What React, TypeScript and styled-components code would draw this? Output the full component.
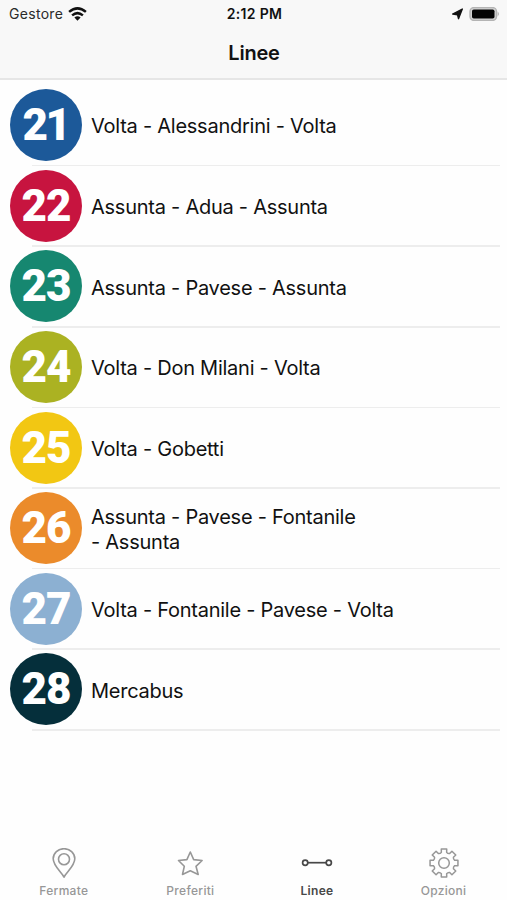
import React from "react";
import styled, { createGlobalStyle } from "styled-components";

const GlobalStyle = createGlobalStyle`
  * { box-sizing: border-box; }
  body { margin: 0; background: #fff; }
`;

const Screen = styled.div`
  width: 507px;
  height: 900px;
  display: flex;
  flex-direction: column;
  overflow: hidden;
  background: #fefefe;
  color: #111;
  font-family: Inter, "Liberation Sans", sans-serif;
`;

const Header = styled.header`
  height: 80px;
  flex: none;
  background: #f8f8f8;
  border-bottom: 2px solid #e6e6e6;
`;

const StatusBar = styled.div`
  height: 27px;
  padding: 0 7px 0 9px;
  display: grid;
  grid-template-columns: 1fr auto 1fr;
  align-items: center;
  font-size: 14px;
  line-height: 28px;
`;

const Carrier = styled.div`
  display: flex;
  align-items: center;
  gap: 5px;
  color: #2a2a2a;
  letter-spacing: 0.3px;
  svg { margin-bottom: 1px; }
`;

const Clock = styled.div`
  font-size: 14px;
  font-weight: 600;
  letter-spacing: 0.3px;
`;

const Indicators = styled.div`
  display: flex;
  justify-content: flex-end;
  align-items: center;
  gap: 6px;
`;

const Title = styled.h1`
  margin: 0;
  padding-left: 1px;
  height: 52px;
  line-height: 52px;
  text-align: center;
  font-size: 20px;
  font-weight: 600;
  letter-spacing: -0.2px;
`;

const List = styled.ul`
  flex: 1;
  margin: 0;
  padding: 5.8px 0 0;
  list-style: none;
`;

const Row = styled.li`
  height: 80.6px;
  padding-left: 10px;
  display: grid;
  grid-template-columns: 22px 50px 9px 1fr;
  grid-template-rows: 1fr 1.6px;
  align-items: center;
`;

const Badge = styled.div<{ $color: string; $tight: boolean }>`
  grid-column: 1 / 3;
  width: 72px;
  height: 72px;
  padding-right: ${(p) => (p.$tight ? 1 : 0)}px;
  border-radius: 50%;
  background: ${(p) => p.$color};
  color: #fff;
  display: flex;
  align-items: center;
  justify-content: center;
  font: 900 44px/72px Roboto, sans-serif;
  letter-spacing: ${(p) => (p.$tight ? -2.5 : -1)}px;
`;

const Name = styled.div`
  grid-column: 4;
  padding-top: 2.6px;
  max-width: 325px;
  white-space: pre-line;
  font-size: 20px;
  line-height: 24.4px;
  letter-spacing: -0.25px;
`;

const Separator = styled.div`
  grid-column: 2 / 5;
  align-self: stretch;
  margin-right: 7px;
  background: #ededed;
`;

const TabBar = styled.nav`
  height: 61px;
  flex: none;
  display: grid;
  grid-template-columns: repeat(4, 126.6px);
`;

const Tab = styled.div<{ $active?: boolean }>`
  display: flex;
  flex-direction: column;
  align-items: center;
  padding: 9px 0 0 1px;
  color: ${(p) => (p.$active ? "#484848" : "#979797")};
  font-size: 12px;
  font-weight: ${(p) => (p.$active ? 600 : 500)};
  line-height: 15px;
  letter-spacing: 0.3px;
  svg { margin-bottom: 5px; }
`;

const lines = [
  { n: 21, color: "#1c5999", name: "Volta - Alessandrini - Volta" },
  { n: 22, color: "#c7143f", name: "Assunta - Adua - Assunta" },
  { n: 23, color: "#168770", name: "Assunta - Pavese - Assunta" },
  { n: 24, color: "#abb222", name: "Volta - Don Milani - Volta" },
  { n: 25, color: "#f2c713", name: "Volta - Gobetti" },
  { n: 26, color: "#eb8b2b", name: "Assunta - Pavese - Fontanile\n- Assunta" },
  { n: 27, color: "#8cb0d2", name: "Volta - Fontanile - Pavese - Volta" },
  { n: 28, color: "#052f3b", name: "Mercabus" },
];

const Wifi = () => (
  <svg width="19" height="14" viewBox="0 0 19 14" fill="none" stroke="#111" strokeWidth="2.5">
    <path d="M1.1 4.9Q9.5-2.2 17.9 4.9M4.1 8.4Q9.5 3.9 14.9 8.4" />
    <path d="M6.4 10.6Q9.5 8 12.6 10.6L9.5 13.7Z" fill="#111" stroke="none" />
  </svg>
);

const Arrow = () => (
  <svg width="11" height="12" viewBox="0 0 11 12">
    <path d="M10.3 1 6.5 10.7 5.5 6.7.7 6Z" fill="#111" stroke="#111" strokeWidth="1.4" strokeLinejoin="round" />
  </svg>
);

const Battery = () => (
  <svg width="31" height="14" viewBox="0 0 31 14">
    <rect x="1" y=".6" width="26.5" height="12.8" rx="3.8" fill="#d2d2d2" stroke="#b4b4b4" strokeWidth="1.4" />
    <rect x="3" y="2.5" width="22.5" height="9" rx="1.8" fill="#050505" />
    <path d="M28.7 4.6Q31 7 28.7 9.4Z" fill="#aaa" />
  </svg>
);

const Pin = () => (
  <svg width="30" height="30" viewBox="0 0 30 30" fill="none" stroke="currentColor" strokeWidth="1.6" strokeLinejoin="round">
    <path d="M15 29.1C13 24.7 4.2 18 4.2 10.8a10.8 10.1 0 0 1 21.6 0C25.8 18 17 24.7 15 29.1Z" />
    <circle cx="15" cy="11.3" r="5.5" />
  </svg>
);

const Star = () => (
  <svg width="30" height="30" viewBox="0 0 30 30" fill="none" stroke="currentColor" strokeWidth="1.6" strokeLinejoin="round">
    <path d="m15.3 4 3.4 7.6 8.4.9-6.1 5.8 2.2 8.2-7.9-3.7-7.8 3.7 1.8-8.2-5.8-5.8 8.4-.9Z" />
  </svg>
);

const LineIcon = () => (
  <svg width="32" height="30" viewBox="0 0 32 30" fill="none" stroke="currentColor" strokeWidth="1.7">
    <circle cx="4.2" cy="14.7" r="2.6" />
    <circle cx="27.8" cy="14.7" r="2.6" />
    <path d="M6.8 14.7h18.4" />
  </svg>
);

const teeth = Array.from({ length: 8 }, (_, i) => {
  const point = (radius: number, degrees: number) => {
    const a = ((i * 45 + degrees - 90) * Math.PI) / 180;
    return `${(15 + radius * Math.cos(a)).toFixed(2)} ${(15 + radius * Math.sin(a)).toFixed(2)}`;
  };
  return `${i ? "L" : "M"}${point(11, -14)}L${point(14.2, -11)}L${point(14.2, 11)}L${point(11, 14)}Q${point(9.9, 22.5)} ${point(11, 31)}`;
}).join("");

const Gear = () => (
  <svg width="30" height="30" viewBox="0 0 30 30" fill="none" stroke="currentColor" strokeWidth="1.5" strokeLinejoin="round">
    <path d={`${teeth}Z`} />
    <circle cx="15" cy="15" r="5.3" />
  </svg>
);

export default function App() {
  return (
    <Screen>
      <GlobalStyle />
      <Header>
        <StatusBar>
          <Carrier>Gestore <Wifi /></Carrier>
          <Clock>2:12 PM</Clock>
          <Indicators><Arrow /><Battery /></Indicators>
        </StatusBar>
        <Title>Linee</Title>
      </Header>
      <List>
        {lines.map((line) => (
          <Row key={line.n}>
            <Badge $color={line.color} $tight={line.n === 21}>{line.n}</Badge>
            <Name>{line.name}</Name>
            <Separator />
          </Row>
        ))}
      </List>
      <TabBar>
        <Tab><Pin />Fermate</Tab>
        <Tab><Star />Preferiti</Tab>
        <Tab $active><LineIcon />Linee</Tab>
        <Tab><Gear />Opzioni</Tab>
      </TabBar>
    </Screen>
  );
}
